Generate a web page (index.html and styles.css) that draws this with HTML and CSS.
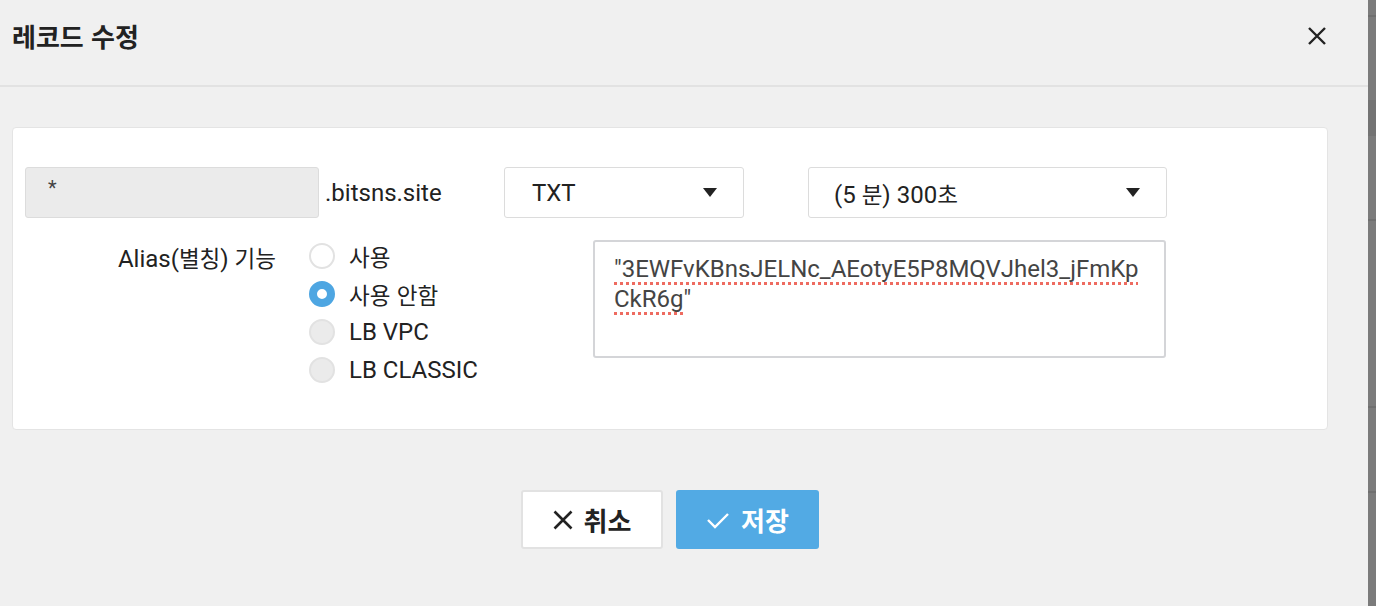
FILE: index.html
```html
<!DOCTYPE html>
<html lang="ko">
<head>
    <meta charset="UTF-8">
    <meta name="viewport" content="width=device-width, initial-scale=1.0">
    <title>레코드 수정</title>
    <link rel="stylesheet" href="styles.css">
</head>
<body>
    <div class="modal">
        <div class="modal-header">
            <h1>레코드 수정</h1>
            <button class="close-button" aria-label="닫기">
                <svg width="20" height="20" viewBox="0 0 20 20"><path d="M2 2 L18 18 M18 2 L2 18" stroke="#222" stroke-width="2.4" fill="none"/></svg>
            </button>
        </div>

        <div class="modal-body">
            <div class="record-card">
                <div class="record-row">
                    <div class="name-input">*</div>
                    <span class="domain">.bitsns.site</span>
                    <div class="select select-type">TXT<span class="caret"></span></div>
                    <div class="select select-ttl"><span>(5 <span class="ko">분</span>) 300<span class="ko">초</span></span><span class="caret"></span></div>
                </div>
                <div class="record-row alias-row">
                    <div class="alias-label">Alias(<span class="ko">별칭</span>) <span class="ko">기능</span></div>
                    <div class="radio-group">
                        <div class="radio"><span class="radio-dot"></span><span class="ko">사용</span></div>
                        <div class="radio"><span class="radio-dot checked"></span><span class="ko">사용 안함</span></div>
                        <div class="radio"><span class="radio-dot disabled"></span>LB VPC</div>
                        <div class="radio"><span class="radio-dot disabled"></span>LB CLASSIC</div>
                    </div>
                    <div class="value-box"><span class="misspelled">"3EWFvKBnsJELNc_AEotyE5P8MQVJhel3_jFmKpCkR6g</span>"</div>
                </div>
            </div>

            <div class="actions">
                <button class="btn btn-cancel">
                    <svg width="20" height="20" viewBox="0 0 20 20"><path d="M1.5 1.5 L18.5 18.5 M18.5 1.5 L1.5 18.5" stroke="#222" stroke-width="2.6" fill="none"/></svg>
                    취소
                </button>
                <button class="btn btn-save">
                    <svg width="24" height="20" viewBox="0 0 24 20"><path d="M2 10 L9 17 L22 4" stroke="#fff" stroke-width="2.4" fill="none"/></svg>
                    저장
                </button>
            </div>
        </div>
    </div>
    <div class="backdrop-edge"></div>
</body>
</html>
```

FILE: styles.css
```css
body {
    margin: 0;
    display: flex;
    height: 606px;
    overflow: hidden;
    font-family: Roboto, "Noto Sans CJK KR", sans-serif;
    color: #222;
    background-color: #f0f0f0;
}
.ko {
    font-family: "Noto Sans CJK KR", sans-serif;
    font-size: 22.5px;
}
.modal {
    flex: 1;
    background-color: #f0f0f0;
}
.backdrop-edge {
    width: 8px;
    background-color: #7b7b7b;
    background-image: linear-gradient(#6f6f6f, #6f6f6f), linear-gradient(#737373, #737373), linear-gradient(#6f6f6f, #6f6f6f), linear-gradient(#6f6f6f, #6f6f6f), linear-gradient(#6f6f6f, #6f6f6f);
    background-size: 8px 2px, 8px 36px, 8px 2px, 8px 2px, 8px 2px;
    background-position: 0 15px, 0 100px, 0 219px, 0 406px, 0 491px;
    background-repeat: no-repeat;
}
.modal-header {
    height: 87px;
    border-bottom: 2px solid #e2e2e2;
    display: flex;
    align-items: center;
    justify-content: space-between;
    padding: 0 40px 14px 12px;
    box-sizing: border-box;
}
.modal-header h1 {
    margin: 0;
    font-size: 26px;
    font-weight: bold;
    font-family: "Noto Sans CJK KR", sans-serif;
    color: #222;
}
.close-button {
    border: none;
    background: none;
    padding: 0;
    margin-right: 1px;
    width: 20px;
    height: 20px;
    cursor: pointer;
}
.modal-body {
    padding: 40px 40px 0 12px;
}
.record-card {
    background-color: #fff;
    border: 1px solid #e4e4e4;
    border-radius: 4px;
    padding: 39px 12px 46px;
}
.record-row {
    display: flex;
    align-items: center;
    font-size: 24px;
}
.name-input {
    width: 294px;
    height: 51px;
    box-sizing: border-box;
    background-color: #ebebeb;
    border: 1px solid #dcdcdc;
    border-radius: 3px;
    padding: 8px 0 0 22px;
    color: #444;
    font-size: 20px;
}
.domain {
    margin-left: 6px;
    width: 179px;
}
.select {
    height: 51px;
    box-sizing: border-box;
    border: 1px solid #dcdcdc;
    border-radius: 3px;
    display: flex;
    align-items: center;
    justify-content: space-between;
    padding: 0 26px 0 27px;
}
.select-type {
    width: 240px;
}
.select-ttl {
    width: 359px;
    margin-left: 64px;
    padding-left: 25px;
}
.caret {
    width: 0;
    height: 0;
    border-left: 7px solid transparent;
    border-right: 7px solid transparent;
    border-top: 9px solid #222;
}
.alias-row {
    align-items: flex-start;
    margin-top: 22px;
}
.alias-label {
    width: 251px;
    text-align: right;
    margin-top: 2px;
    line-height: 30px;
}
.radio-group {
    margin-left: 33px;
    margin-top: 3px;
    width: 284px;
    display: flex;
    flex-direction: column;
    gap: 12px;
}
.radio {
    display: flex;
    align-items: center;
    gap: 14px;
    height: 26px;
}
.radio-dot {
    flex: none;
    width: 26px;
    height: 26px;
    box-sizing: border-box;
    border-radius: 50%;
    border: 2px solid #e2e2e2;
    background-color: #fff;
}
.radio-dot.checked {
    border: 8px solid #4ea6e2;
    background-color: #fff;
}
.radio-dot.disabled {
    background-color: #ebebeb;
}
.value-box {
    width: 573px;
    height: 118px;
    box-sizing: border-box;
    border: 2px solid #d4d5d8;
    border-radius: 3px;
    padding: 12px 14px 0 19px;
    line-height: 30px;
    color: #444;
    overflow-wrap: anywhere;
}
.misspelled {
    text-decoration: underline dotted #ee6b60;
    text-decoration-thickness: 3px;
    text-decoration-skip-ink: none;
    text-underline-offset: 5px;
}
.actions {
    display: flex;
    justify-content: center;
    gap: 13px;
    margin-top: 60px;
}
.btn {
    width: 142px;
    height: 59px;
    box-sizing: border-box;
    border-radius: 3px;
    font-size: 26px;
    font-weight: bold;
    font-family: "Noto Sans CJK KR", sans-serif;
    display: flex;
    align-items: center;
    justify-content: center;
    gap: 11px;
    cursor: pointer;
}
.btn-cancel {
    background-color: #fff;
    border: 2px solid #e2e2e2;
    color: #222;
}
.btn-save {
    background-color: #52aae4;
    border: none;
    color: #fff;
    width: 143px;
}
```
